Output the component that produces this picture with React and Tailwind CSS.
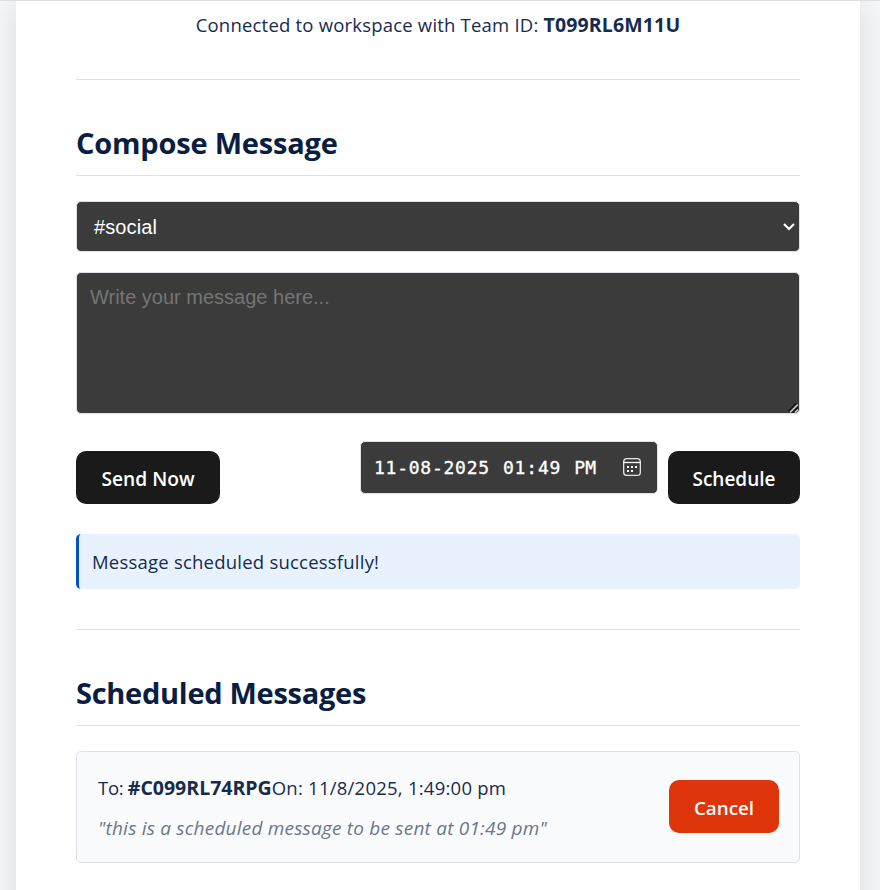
function CalendarIcon() {
  return (
    <svg className="mb-[2px]" width="18" height="18" viewBox="0 0 18 18" fill="none" stroke="#e4e4e4" strokeWidth="1.3">
      <rect x="0.65" y="0.65" width="16.7" height="16.7" rx="3.2" />
      <path d="M0.6 4.5H17.4" stroke="#fff" />
      <g fill="#fff" stroke="none">
        <rect x="4" y="8" width="2" height="2" />
        <rect x="8" y="8" width="2" height="2" />
        <rect x="12" y="8" width="2" height="2" />
        <rect x="4" y="12" width="2" height="2" />
        <rect x="8" y="12" width="2" height="2" />
      </g>
    </svg>
  );
}

function SectionTitle({ children, className }) {
  return (
    <h2 className={`h-[65px] border-b border-[#dfe1e6] pt-[11px] text-[29px] leading-[42px] font-bold whitespace-nowrap text-[#091e42] ${className}`}>
      {children}
    </h2>
  );
}

function Button({ children, className }) {
  return (
    <button className={`h-[53px] shrink-0 rounded-[10px] pt-[3px] text-center font-semibold whitespace-nowrap text-white ${className}`}>
      {children}
    </button>
  );
}

export default function App() {
  return (
    <div className="h-[890px] overflow-hidden border-t border-[#dedfe0] bg-[#f4f5f7] pr-5 pl-4 font-['Open_Sans','Noto_Sans',sans-serif] text-[18.5px] text-[#172b4d]">
      <main className="h-[920px] bg-white px-[60px] shadow-[0_5px_25px_rgba(0,0,0,0.1)]">
        <p className="h-[78px] pt-[11px] text-center leading-[26px] whitespace-nowrap">
          <span className="tracking-[0.2px]">Connected to workspace with Team ID: </span>
          <strong className="text-[19.5px] tracking-[0.15px]">T099RL6M11U</strong>
        </p>
        <section className="border-t border-[#dfe1e6] pt-[31px]">
          <SectionTitle className="tracking-[-0.2px]">Compose Message</SectionTitle>
          <div className="mt-[25px] flex h-[51px] items-center justify-between rounded-[5px] border border-[#dfe1e6] bg-[#3b3b3b] pr-[4px] pl-[17px] font-['Liberation_Sans',sans-serif] text-[20px] text-white">
            <span className="tracking-[0.1px]">#social</span>
            <svg width="12" height="8" viewBox="0 0 12 8" fill="none" stroke="#fff" strokeWidth="2.2">
              <path d="M1 1L6 6L11 1" />
            </svg>
          </div>
          <div className="mt-5 flex h-[142px] justify-between rounded-[5px] border border-[#dfe1e6] bg-[#3b3b3b] pl-[13px] font-['Liberation_Sans',sans-serif] text-[20px] text-[#757575]">
            <span className="pt-[13px] leading-[23px]">Write your message here...</span>
            <svg className="mr-px self-end" width="10" height="10" viewBox="0 0 10 10" fill="none">
              <path d="M0.5 8.5L8.5 0.5M4.8 9.5L10 4.3" stroke="#111" strokeWidth="1.7" />
              <path d="M2 9.2L9.8 1.5M7 9.5L10 6.5" stroke="#ccc" strokeWidth="1.6" />
            </svg>
          </div>
          <div className="mt-[27px] flex h-[63px] items-end justify-between">
            <Button className="w-[144px] bg-[#1a1a1a] text-[19.2px]">Send Now</Button>
            <div className="flex h-full gap-[10px]">
              <div className="flex h-[53px] w-[298px] items-center justify-between rounded-[5px] border border-[#dfe1e6] bg-[#3b3b3b] pr-[16px] pl-[13px] font-['DejaVu_Sans_Mono',monospace] text-[18px] whitespace-nowrap text-white [-webkit-text-stroke:0.35px_#fff]">
                <span className="flex gap-[13px]">
                  <span className="tracking-[0.75px]">11-08-2025</span>
                  <span className="tracking-[0.85px]">01:49</span>
                  <span>PM</span>
                </span>
                <CalendarIcon />
              </div>
              <Button className="w-[132px] self-end bg-[#1a1a1a] text-[19px]">Schedule</Button>
            </div>
          </div>
          <div className="mt-[30px] h-[55px] rounded-[5px] border-l-[3px] border-[#0052cc] bg-[#e8f2ff] pt-[15px] pl-[13px] leading-[26px] tracking-[0.22px] whitespace-nowrap">
            <span>Message scheduled successfully!</span>
          </div>
        </section>
        <section className="mt-10 border-t border-[#dfe1e6] pt-[31px]">
          <SectionTitle className="tracking-[-0.28px]">Scheduled Messages</SectionTitle>
          <div className="mt-[25px] flex h-[112px] justify-between rounded-[5px] border border-[#dfe1e6] bg-[#fafbfc] pr-5 pl-[21px] whitespace-nowrap">
            <div className="flex flex-col gap-[14px] pt-[23px] leading-[26px]">
              <p className="h-[26px]">
                <span className="tracking-[-0.3px]">To: </span>
                <strong className="text-[19.5px]">#C099RL74RPG</strong>
                <span className="tracking-[0.24px]">On: 11/8/2025, 1:49:00 pm</span>
              </p>
              <p className="h-[26px] text-[19px] tracking-[0.21px] text-[#6b778c] italic">"this is a scheduled message to be sent at 01:49 pm"</p>
            </div>
            <Button className="mt-7 w-[110px] bg-[#de350b] text-[18.8px]">Cancel</Button>
          </div>
        </section>
      </main>
    </div>
  );
}
